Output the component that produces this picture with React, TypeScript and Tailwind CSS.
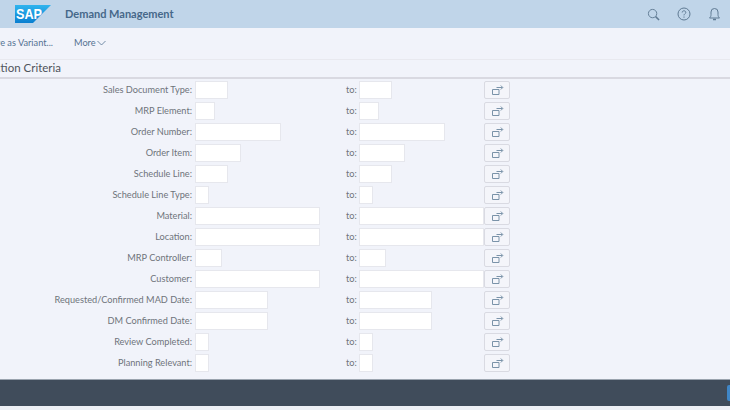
const rows = [
  { label: "Sales Document Type:", width: "w-[33px]" },
  { label: "MRP Element:", width: "w-[20px]" },
  { label: "Order Number:", width: "w-[86px]" },
  { label: "Order Item:", width: "w-[46px]" },
  { label: "Schedule Line:", width: "w-[33px]" },
  { label: "Schedule Line Type:", width: "w-[14px]" },
  { label: "Material:", width: "w-[125px]" },
  { label: "Location:", width: "w-[125px]" },
  { label: "MRP Controller:", width: "w-[27px]" },
  { label: "Customer:", width: "w-[125px]" },
  { label: "Requested/Confirmed MAD Date:", width: "w-[73px]" },
  { label: "DM Confirmed Date:", width: "w-[73px]" },
  { label: "Review Completed:", width: "w-[14px]" },
  { label: "Planning Relevant:", width: "w-[14px]" },
];

function MultiIcon() {
  return (
    <svg width="13" height="12" viewBox="0 0 13 12" fill="none" stroke="#7a93a9" strokeWidth="1">
      <path d="M8 5.500H1.500v5h6.500z" />
      <path d="M5.500 3.500h6M9.800 1.500l2 2-2 2" />
    </svg>
  );
}

function Field({ width }: { width: string }) {
  return <div className={`h-[18px] shrink-0 border border-[#e6e7ed] bg-white ${width}`} />;
}

export default function App() {
  return (
    <div className="flex h-[410px] w-[730px] flex-col overflow-hidden bg-[#f1f3fa] font-['Lato','Liberation_Sans',sans-serif] text-[#6f747b]">
      <header className="flex h-[28px] shrink-0 items-center bg-[#c0d5e9] pl-[15px]">
        <svg width="36" height="18" viewBox="0 0 36 18">
          <defs>
            <linearGradient id="sap" x1="0" y1="0" x2="0" y2="1">
              <stop offset="0" stopColor="#2fb4ee" />
              <stop offset="1" stopColor="#0a7fd0" />
            </linearGradient>
          </defs>
          <path d="M0 0h36L18 18H0z" fill="url(#sap)" />
          <text x="1" y="14" fill="#fff" fontSize="14" fontWeight="700" fontFamily="'Liberation Sans', sans-serif" textLength="26" lengthAdjust="spacingAndGlyphs">
            SAP
          </text>
        </svg>
        <span className="ml-[14px] text-[11px] font-bold text-[#46688a]">Demand Management</span>
        <div className="ml-auto flex items-center gap-[17px] pr-[9px]">
          <svg width="13" height="13" viewBox="0 0 14 14" fill="none" stroke="#5f7a93" strokeWidth="1">
            <circle cx="6" cy="6" r="4.500" />
            <path d="M9.300 9.300l3.700 3.700" strokeWidth="1.600" />
          </svg>
          <svg width="14" height="14" viewBox="0 0 14 14" fill="none" stroke="#5f7a93" strokeWidth="1">
            <circle cx="7" cy="7" r="6" />
            <path d="M5.200 5.500C5.200 4.400 6 3.800 7 3.800s1.800.6 1.800 1.600c0 1.400-1.800 1.400-1.800 3" />
            <path d="M7 9.500v1.200" />
          </svg>
          <svg width="13" height="14" viewBox="0 0 13 14" fill="none" stroke="#5f7a93" strokeWidth="1">
            <path d="M1.500 11c1-1 1.500-1.800 1.500-3.500V5a3.500 3.500 0 017 0v2.500c0 1.700.5 2.500 1.500 3.500z" />
            <path d="M5 12.500h3" strokeWidth="1.500" />
          </svg>
        </div>
      </header>

      <div className="flex h-[32px] shrink-0 items-center border-b border-[#e8e9ef] pb-[1px] text-[9.200px] text-[#547292]">
        <div className="flex w-[53px] shrink-0 justify-end overflow-hidden whitespace-nowrap">Save as Variant...</div>
        <span className="ml-[21px]">More</span>
        <svg className="ml-[1px]" width="9" height="6" viewBox="0 0 9 6" fill="none" stroke="#547292" strokeWidth="0.800">
          <path d="M.5 1l4 4 4-4" />
        </svg>
      </div>

      <div className="flex h-[19px] shrink-0 items-center border-b-2 border-[#d9d9e1] pb-[1px] text-[11.500px] text-[#4f545a]">
        <div className="flex w-[61px] shrink-0 justify-end overflow-hidden whitespace-nowrap">Selection Criteria</div>
      </div>

      <div className="flex flex-1 flex-col gap-[3px] pt-[2px] text-[9.200px]">
        {rows.map((row) => (
          <div key={row.label} className="flex h-[18px] items-center">
            <div className="w-[192px] shrink-0 whitespace-nowrap text-right">{row.label}</div>
            <div className="ml-[3px] w-[151px] shrink-0">
              <Field width={row.width} />
            </div>
            <div className="w-[13px] shrink-0">to:</div>
            <div className="w-[125px] shrink-0">
              <Field width={row.width} />
            </div>
            <button className="flex h-[18px] w-[26px] shrink-0 items-center justify-center rounded-[2px] border border-[#d9dae2] bg-[#f4f5fa]">
              <MultiIcon />
            </button>
          </div>
        ))}
      </div>

      <footer className="flex h-[27px] shrink-0 items-center justify-end border-t border-[#9aa3ae] bg-[#404c5b]">
        <div className="h-[16px] w-[3px] rounded-l-[2px] bg-[#3f86c7]" />
      </footer>
      <div className="h-[4px] shrink-0 bg-[#eef0f6]" />
    </div>
  );
}
